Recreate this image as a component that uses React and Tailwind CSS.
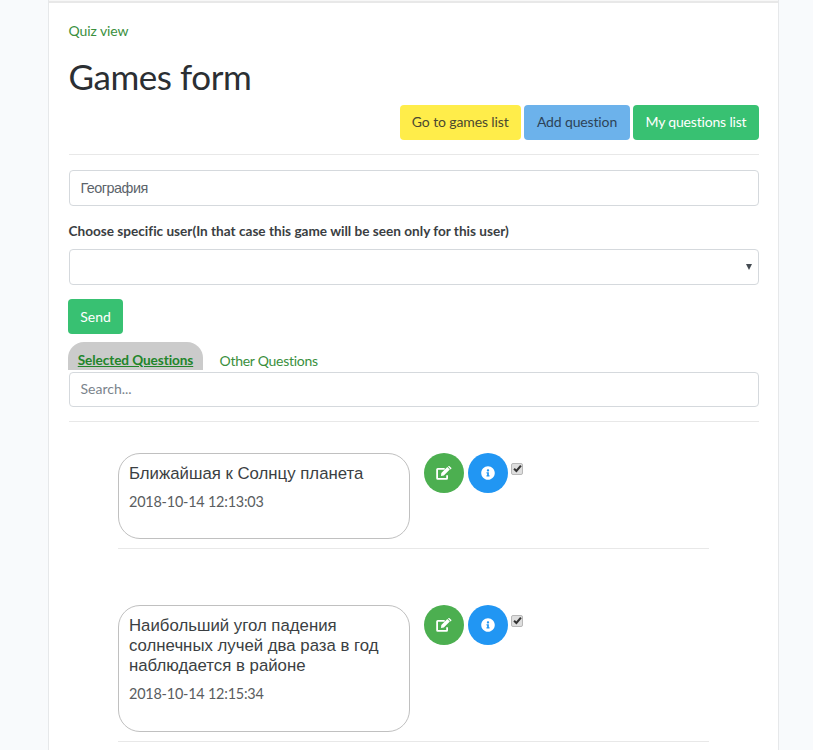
import React from "react";
import { FaInfoCircle } from "react-icons/fa";

const questions = [
  { title: "Ближайшая к Солнцу планета", date: "2018-10-14 12:13:03", box: "h-[86px]" },
  {
    title: "Наибольший угол падения солнечных лучей два раза в год наблюдается в районе",
    date: "2018-10-14 12:15:34",
    box: "h-[127px]",
  },
];

function EditIcon() {
  return (
    <svg viewBox="0 0 16 14" className="h-[14px] w-4" fill="none">
      <path d="M8.7 2.9H1.7a.6.6 0 0 0-.6.6v8.8c0 .3.3.6.6.6h8.8c.3 0 .6-.3.6-.6V9.2" stroke="currentColor" strokeWidth="1.8" />
      <path d="M5 9.9 5.3 7 11.3 1.1l2.5 2.5-6 6zM12 .6l.4-.4c.3-.3.8-.3 1.1 0l1.7 1.6c.3.3.3.8 0 1.1l-.6.5z" fill="currentColor" />
    </svg>
  );
}

function Checkbox() {
  return (
    <span
      role="checkbox"
      aria-checked="true"
      className="mt-[10px] ml-[3px] flex h-[12px] w-[12px] items-center justify-center rounded-[2px] border border-[#b8b8b8] bg-[#dedede]"
    >
      <svg viewBox="0 0 10 10" className="h-[9px] w-[9px] shrink-0" fill="none" stroke="#333" strokeWidth="2.3">
        <path d="M1.2 5.2 3.8 7.8 8.8 1.8" />
      </svg>
    </span>
  );
}

function Question({ title, date, box }) {
  return (
    <div className="ml-[49.5px] w-[591px]">
      <div className="flex items-start">
        <div className={`w-[292px] rounded-[22px] border border-[#c0c0c0] px-[10px] pt-[10px] ${box}`}>
          <h5 className="font-['Liberation_Sans',sans-serif] text-[16.8px] leading-5 text-[#3b3f43]">{title}</h5>
          <p className="mt-[7px] text-[14.4px] leading-[22px] tracking-[-0.2px] text-[#5a5d60]">{date}</p>
        </div>
        <button className="ml-[14px] flex size-10 items-center justify-center rounded-full bg-[#4caf50] text-white">
          <EditIcon />
        </button>
        <button className="ml-1 flex size-10 items-center justify-center rounded-full bg-[#2196f3] text-white">
          <FaInfoCircle className="size-[14px]" />
        </button>
        <Checkbox />
      </div>
      <hr className="mt-[9px] border-[#e8e8e8]" />
    </div>
  );
}

export default function App() {
  return (
    <div className="h-[750px] overflow-hidden bg-[#f8fafc] font-[Lato,'Liberation_Sans',sans-serif] text-[14px] leading-[23px] text-[#212529] [font-variant-ligatures:none]">
      <main className="ml-[48px] h-[750px] w-[731px] border-x border-[#e6e8ea] bg-white">
        <div className="h-[3px] border-b-2 border-[#e8e8e8] bg-[#f7f7f7]" />
        <div className="pt-[16px] pr-[19px] pl-[19.5px]">
          <a href="#quiz" className="block h-[23px] tracking-[-0.08px] text-[#3a8f3d]">Quiz view</a>
          <h1 className="mt-[13px] h-[43px] text-[35px] leading-[42px] tracking-[-0.45px] text-[#2b2f33]">Games form</h1>
          <div className="mt-[7px] flex h-[35px] justify-end gap-[3px]">
            <button className="w-[121.5px] rounded-[4px] bg-[#ffed4a] pb-[2px] tracking-[-0.12px] text-[#4a4830]">Go to games list</button>
            <button className="w-[106px] rounded-[4px] bg-[#6cb2eb] pb-[2px] tracking-[-0.14px] text-[#2c4358]">Add question</button>
            <button className="w-[126px] rounded-[4px] bg-[#38c172] pb-[2px] tracking-[-0.18px] text-white">My questions list</button>
          </div>
          <hr className="mt-[14px] border-[#e8e8e8]" />
          <div className="mt-[15px] h-9 rounded-[4px] border border-[#d5d9dd] px-[11px] font-['Liberation_Sans',sans-serif] text-[14.4px] leading-[34px] tracking-[-0.5px] text-[#5c646b]">География</div>
          <label className="mt-[14px] block h-[23px] text-[13.6px] font-bold text-[#3a3e42]">
            Choose specific user(In that case this game will be seen only for this user)
          </label>
          <div className="mt-[6px] flex h-9 items-center justify-end rounded-[4px] border border-[#d5d9dd] pr-[6px]">
            <svg viewBox="0 0 6 6" className="size-[6px]"><path d="M0 0h6L3 6z" fill="#444b52" /></svg>
          </div>
          <button className="-ml-[0.5px] mt-[14px] block h-[35px] w-[55px] rounded-[4px] bg-[#38c172] pb-[1px] text-white">Send</button>
          <div className="-ml-[0.5px] mt-[8px] flex h-[28px] leading-[37px]">
            <a href="#selected" className="block w-[135px] rounded-t-[16px] bg-[#cbcbcb] text-center text-[13.6px] font-bold tracking-[-0.08px] text-[#22852a] underline">Selected Questions</a>
            <a href="#other" className="ml-[16.5px] tracking-[-0.27px] text-[#3a8f3d]">Other Questions</a>
          </div>
          <div className="mt-[2px] h-[35px] rounded-[4px] border border-[#d5d9dd] px-[11px] leading-[31px] text-[#7b848c]">Search...</div>
          <hr className="mt-[14px] border-[#e8e8e8]" />
          <div className="flex flex-col gap-[56px] pt-[30.5px]">
            {questions.map((q) => (
              <Question key={q.date} {...q} />
            ))}
          </div>
        </div>
      </main>
    </div>
  );
}
